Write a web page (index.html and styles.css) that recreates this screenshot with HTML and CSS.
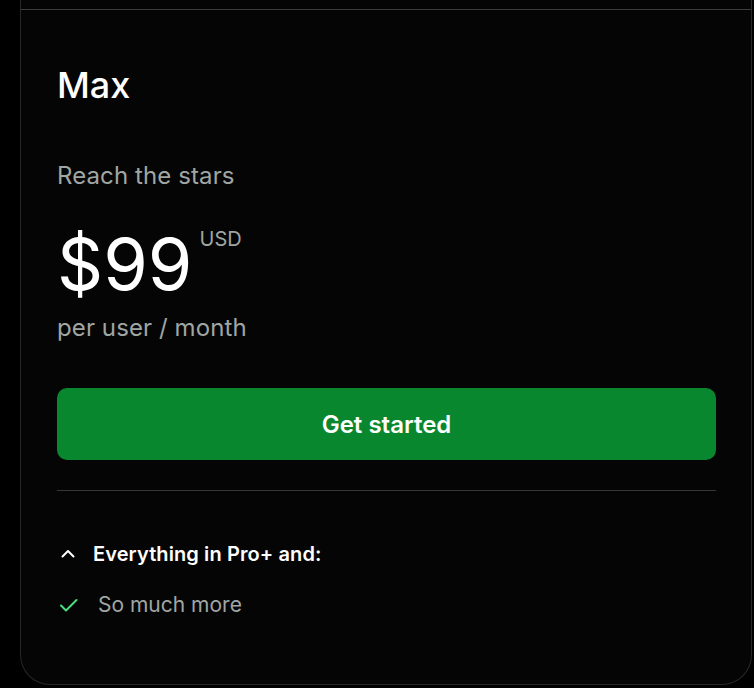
FILE: index.html
```html
<!doctype html>
<html>
<head>
<meta charset="utf-8">
<meta name="viewport" content="width=device-width, initial-scale=1.0">
<link rel="stylesheet" href="styles.css">
<title>Max plan</title>
</head>
<body>
<div class="plan">
  <div class="plan-top"></div>
  <div class="plan-body">
    <h2 class="plan-name">Max</h2>
    <p class="plan-tagline">Reach the stars</p>
    <div class="price">
      <span class="price-amount">$99</span>
      <span class="price-currency">USD</span>
    </div>
    <p class="price-unit">per user / month</p>
    <a class="btn-start" href="#">Get started</a>
    <hr class="plan-rule">
    <div class="features-head">
      <svg class="chevron" width="16" height="16" viewBox="0 0 16 16" fill="none" stroke="currentColor" stroke-width="2" stroke-linecap="round" stroke-linejoin="round"><path d="M2.5 10.5 8 5l5.5 5.5"/></svg>
      <span>Everything in Pro+ and:</span>
    </div>
    <ul class="features">
      <li>
        <svg class="check" width="20" height="20" viewBox="0 0 20 20" fill="none" stroke="currentColor" stroke-width="2" stroke-linecap="round" stroke-linejoin="round"><path d="M2 10.5 7 15.5 17.5 5"/></svg>
        <span>So much more</span>
      </li>
    </ul>
  </div>
</div>
</body>
</html>
```

FILE: styles.css
```css
h2,
p,
ul {
    margin: 0;
    padding: 0;
}
body {
    margin: 0;
    background-color: #000;
    font-family: Inter, "Liberation Sans", Arial, sans-serif;
    color: #fff;
}
.plan {
    margin-left: 20px;
    width: 730px;
    background-color: #050505;
    border: 1px solid #262727;
    border-top: none;
    border-radius: 0 0 30px 30px;
}
.plan-top {
    height: 9px;
    border-bottom: 1px solid #3a3e3d;
}
.plan-body {
    display: flex;
    flex-direction: column;
    padding: 53px 35px 65px 36px;
}
.plan-name {
    font-size: 36px;
    line-height: 44px;
    font-weight: 500;
}
.plan-tagline {
    margin-top: 53px;
    font-size: 24px;
    line-height: 32px;
    letter-spacing: 0.1px;
    color: #a0a6a4;
}
.price {
    display: flex;
    align-items: flex-start;
    gap: 7px;
    margin-top: 32px;
}
.price-amount {
    font-size: 72px;
    line-height: 80px;
}
.price-currency {
    margin-top: 3px;
    font-size: 20px;
    line-height: 24px;
    color: #a0a6a4;
}
.price-unit {
    margin-top: 8px;
    font-size: 24px;
    line-height: 32px;
    letter-spacing: 0.1px;
    color: #a0a6a4;
}
.btn-start {
    display: flex;
    align-items: center;
    justify-content: center;
    height: 72px;
    margin-top: 44px;
    border-radius: 10px;
    background-color: #08872e;
    color: #fff;
    font-size: 24px;
    font-weight: 600;
    text-decoration: none;
}
.plan-rule {
    margin: 30px 0 0;
    border: 0;
    border-top: 1px solid #343837;
}
.features-head {
    display: flex;
    align-items: center;
    gap: 17px;
    margin-top: 49px;
    margin-left: 3px;
    font-size: 20px;
    line-height: 28px;
    font-weight: 600;
    letter-spacing: 0.1px;
}
.features {
    list-style: none;
    margin-top: 23px;
}
.features li {
    display: flex;
    align-items: center;
    gap: 19px;
    margin-left: 2px;
    font-size: 21px;
    line-height: 28px;
    color: #a0a6a4;
}
.check {
    color: #4ade80;
}
```
